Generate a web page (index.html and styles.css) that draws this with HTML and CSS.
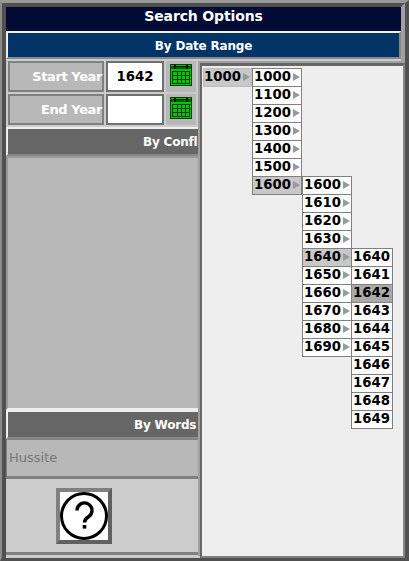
FILE: index.html
```html
<!DOCTYPE html>
<html lang="en">
<head>
<meta charset="utf-8">
<title>Search Options</title>
<link rel="stylesheet" href="styles.css">
</head>
<body>
<div class="window">
  <div class="frame">
    <header class="title">Search Options</header>
    <div class="head head-date">By Date Range</div>
    <section class="years">
      <div class="year-row">
        <div class="label">Start Year</div>
        <div class="value">1642</div>
        <div class="cal"><svg width="22" height="22" viewBox="0 0 22 22"><use href="#calendar"/></svg></div>
      </div>
      <div class="year-row">
        <div class="label">End Year</div>
        <div class="value"></div>
        <div class="cal"><svg width="22" height="22" viewBox="0 0 22 22"><use href="#calendar"/></svg></div>
      </div>
    </section>
    <div class="head head-grey head-conflict">By Conflict</div>
    <div class="list"></div>
    <div class="head head-grey head-words">By Words</div>
    <div class="words">Hussite</div>
    <div class="help">
      <div class="help-btn">
        <svg class="help-icon" width="48" height="48" viewBox="0 0 48 48">
          <rect width="48" height="48" fill="#fff"/>
          <circle cx="24" cy="24" r="22.5" fill="#fff" stroke="#000" stroke-width="3"/>
          <path d="M17 18.5a7.5 7.5 0 1 1 11.5 6.3c-2.5 1.6-4 3-4 5.7" fill="none" stroke="#000" stroke-width="3.4"/>
          <rect x="22.7" y="33" width="3.6" height="3.6" fill="#000"/>
        </svg>
      </div>
    </div>

    <aside class="picker">
      <div class="menu menu-1">
        <div class="item sel-soft">1000<i class="arrow"></i></div>
      </div>
      <div class="menu menu-2">
        <div class="item">1000<i class="arrow"></i></div>
        <div class="item">1100<i class="arrow"></i></div>
        <div class="item">1200<i class="arrow"></i></div>
        <div class="item">1300<i class="arrow"></i></div>
        <div class="item">1400<i class="arrow"></i></div>
        <div class="item">1500<i class="arrow"></i></div>
        <div class="item sel">1600<i class="arrow"></i></div>
      </div>
      <div class="menu menu-3">
        <div class="item">1600<i class="arrow"></i></div>
        <div class="item">1610<i class="arrow"></i></div>
        <div class="item">1620<i class="arrow"></i></div>
        <div class="item">1630<i class="arrow"></i></div>
        <div class="item sel">1640<i class="arrow"></i></div>
        <div class="item">1650<i class="arrow"></i></div>
        <div class="item">1660<i class="arrow"></i></div>
        <div class="item">1670<i class="arrow"></i></div>
        <div class="item">1680<i class="arrow"></i></div>
        <div class="item">1690<i class="arrow"></i></div>
      </div>
      <div class="menu menu-4">
        <div class="item">1640</div>
        <div class="item">1641</div>
        <div class="item cur">1642</div>
        <div class="item">1643</div>
        <div class="item">1644</div>
        <div class="item">1645</div>
        <div class="item">1646</div>
        <div class="item">1647</div>
        <div class="item">1648</div>
        <div class="item">1649</div>
      </div>
    </aside>
  </div>
</div>
<svg class="defs" width="0" height="0">
  <symbol id="calendar" viewBox="0 0 22 22">
    <rect x="0" y="0" width="22" height="22" fill="#004000"/>
    <rect x="1" y="1" width="20" height="20" fill="#00c800"/>
    <rect x="1" y="2" width="20" height="3" fill="#006000"/>
    <rect x="3" y="2" width="16" height="1" fill="#001800"/>
    <rect x="4" y="1" width="2" height="4" fill="#000"/>
    <rect x="16" y="1" width="2" height="4" fill="#000"/>
    <path d="M2 7.5h18M2 11.5h18M2 15.5h18M2 19.5h18M2.5 7v13M7.5 7v13M11.5 7v13M15.5 7v13M19.5 7v13" stroke="#003800" fill="none"/>
  </symbol>
</svg>
</body>
</html>
```
FILE: styles.css
```css
* { box-sizing: border-box; }
html, body { margin: 0; padding: 0; }
body {
  width: 409px;
  height: 561px;
  overflow: hidden;
  background: #505050;
  font-family: "DejaVu Sans", Verdana, sans-serif;
}
.defs { position: absolute; }
.window {
  width: 409px;
  height: 561px;
  border-style: solid;
  border-width: 3px 4px 3px 2px;
  border-color: #999999 #505050 #505050 #8c8c8c;
}
.frame {
  position: relative;
  height: 555px;
  background: #cccccc;
  border-style: solid;
  border-width: 4px 4px 0 4px;
  border-color: #505050 #a0a0a0 #808080 #505050;
  display: flex;
  flex-direction: column;
}
.title {
  height: 24px;
  flex: none;
  background: #000a33;
  color: #fff;
  font-size: 14px;
  font-weight: 700;
  letter-spacing: -0.15px;
  line-height: 18px;
  text-align: center;
}
.head {
  flex: none;
  color: #fff;
  font-size: 12px;
  font-weight: 700;
  letter-spacing: -0.2px;
  text-align: center;
  border-style: solid;
  border-width: 2px;
  border-color: #eeeeee #888888 #888888 #eeeeee;
}
.head-date {
  height: 28px;
  background: #003366;
  line-height: 26px;
}
.head-grey {
  height: 29px;
  background: #666666;
  line-height: 27px;
  text-align: left;
}
.head-conflict { padding-left: 135px; }
.head-words { padding-left: 126px; }
.years {
  flex: none;
  padding: 2px 0 2px 2px;
  display: flex;
  flex-direction: column;
  gap: 2px;
}
.year-row {
  display: flex;
  gap: 2px;
  height: 31px;
}
.label {
  width: 96px;
  background: #b8b8b8;
  border: 2px solid #808080;
  color: #fff;
  font-size: 13px;
  font-weight: 700;
  letter-spacing: -0.4px;
  line-height: 27px;
  text-align: right;
}
.value {
  width: 58px;
  background: #fff;
  border: 2px solid #707070;
  color: #000;
  font-size: 13.3px;
  font-weight: 700;
  line-height: 27px;
  text-align: center;
}
.cal {
  width: 30px;
  background: #b8b8b8;
  display: flex;
  align-items: flex-start;
  justify-content: center;
  padding-top: 3px;
}
.list {
  flex: 1;
  min-height: 0;
  background: #b8b8b8;
  border-style: solid;
  border-width: 2px;
  border-color: #999999 #888888 #eeeeee #999999;
}
.words {
  flex: none;
  height: 40px;
  background: #b8b8b8;
  border-style: solid;
  border-width: 1px 0 3px 1px;
  border-color: #808080;
  color: #777777;
  font-size: 13px;
  line-height: 36px;
  padding-left: 2px;
}
.help {
  flex: none;
  height: 76px;
  margin-bottom: 3px;
  background: #cccccc;
  border-bottom: 3px solid #808080;
  padding: 9px 0 0 50px;
}
.help-btn {
  width: 56px;
  height: 56px;
  background: #fff;
  border: 4px solid;
  border-color: #808080 #606060 #606060 #808080;
}
.help-icon { display: block; }
.picker {
  position: absolute;
  left: 194px;
  top: 56px;
  right: -4px;
  bottom: 0;
  padding: 2px 0 0 1px;
  background: #eeeeee;
  border-style: solid;
  border-width: 3px 2px 2px 2px;
  border-color: #666666 #888888 #808080 #666666;
  box-shadow: -2px -2px 0 #a0a0a0;
  display: flex;
  align-items: flex-start;
}
.menu {
  flex: none;
  display: flex;
  flex-direction: column;
}
.menu-1 { width: 49px; }
.menu-2 { width: 50px; }
.menu-3 { width: 50px; margin-top: 108px; }
.menu-4 { width: 42px; margin-top: 180px; margin-left: -1px; }
.item {
  position: relative;
  height: 19px;
  margin-bottom: -1px;
  padding-left: 1px;
  background: #fff;
  border: 1px solid #808080;
  color: #000;
  font-size: 13.3px;
  font-weight: 700;
  line-height: 15px;
  white-space: nowrap;
}
.item.sel { background: #c8c8c8; }
.item.sel-soft { background: #c8c8c8; border-color: #bbbbbb; padding-left: 0; }
.item.cur { background: #aaaaaa; }
.arrow {
  position: absolute;
  right: 1px;
  top: 4px;
  width: 0;
  height: 0;
  border-style: solid;
  border-width: 4px 0 4px 7px;
  border-color: transparent transparent transparent #999999;
}
```
